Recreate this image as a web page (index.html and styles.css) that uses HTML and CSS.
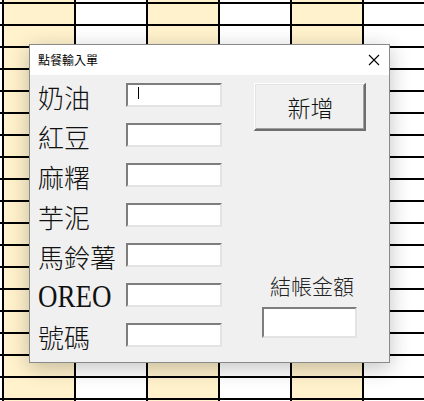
FILE: index.html
```html
<!DOCTYPE html>
<html lang="zh-Hant">
<head>
<meta charset="utf-8">
<title>點餐輸入單</title>
<link rel="stylesheet" href="styles.css">
</head>
<body>
<div class="sheet">
  <div class="dialog">
    <div class="titlebar">
      <span class="title">點餐輸入單</span>
      <svg class="close" width="12" height="12" viewBox="0 0 12 12"><path d="M1 1 L11 11 M11 1 L1 11" stroke="#000" stroke-width="1.1" fill="none"/></svg>
    </div>
    <div class="body">
      <div class="items">
        <div class="row"><span class="label">奶油</span><div class="field"><span class="caret"></span></div></div>
        <div class="row"><span class="label">紅豆</span><div class="field"></div></div>
        <div class="row"><span class="label">麻糬</span><div class="field"></div></div>
        <div class="row"><span class="label">芋泥</span><div class="field"></div></div>
        <div class="row"><span class="label">馬鈴薯</span><div class="field"></div></div>
        <div class="row"><span class="label latin">OREO</span><div class="field"></div></div>
        <div class="row"><span class="label">號碼</span><div class="field"></div></div>
      </div>
      <div class="side">
        <div class="button">新增</div>
        <div class="total-label">結帳金額</div>
        <div class="field total"></div>
      </div>
    </div>
  </div>
</div>
</body>
</html>
```
FILE: styles.css
```css
html, body {
  margin: 0;
  padding: 0;
  background: #fff;
}
.sheet {
  position: relative;
  width: 424px;
  height: 401px;
  overflow: hidden;
  background:
    linear-gradient(to right, #000 0 2px, transparent 2px) 2px 0 / 72px 100%,
    linear-gradient(to bottom, #000 0 2px, transparent 2px) 0 2px / 100% 22px,
    linear-gradient(to right, #fff2cc 0 72px, #fff 72px 144px) 3px 0 / 144px 100%;
  font-family: "Noto Sans CJK TC", "Noto Sans", sans-serif;
}
.dialog {
  position: absolute;
  left: 29px;
  top: 44px;
  width: 361px;
  height: 319px;
  box-sizing: border-box;
  border: 1px solid #8a8a8a;
  background: #f0f0f0;
  box-shadow: 0 5px 20px rgba(0, 0, 0, 0.24);
  display: flex;
  flex-direction: column;
}
.titlebar {
  height: 30px;
  background: #fff;
  display: flex;
  align-items: center;
  justify-content: space-between;
  padding: 0 9px 0 8px;
  flex: none;
}
.title {
  font-size: 12px;
  color: #000;
  line-height: 14px;
}
.close {
  display: block;
}
.body {
  flex: 1;
  display: flex;
}
.items {
  padding: 8px 0 0 8px;
  display: flex;
  flex-direction: column;
  gap: 16px;
}
.row {
  display: flex;
  align-items: center;
  height: 24px;
}
.label {
  width: 88px;
  font-size: 26px;
  font-weight: 300;
  line-height: 26px;
  color: #111;
  white-space: nowrap;
  position: relative;
  top: 2px;
}
.label.latin {
  font-family: "Liberation Serif", serif;
  font-weight: 400;
  font-size: 27px;
  transform: scaleY(1.15);
  transform-origin: left center;
}
.field {
  width: 96px;
  height: 24px;
  box-sizing: border-box;
  background: #fff;
  border-top: 2px solid #7d7d7d;
  border-left: 2px solid #7d7d7d;
  border-bottom: 2px solid #e3e3e3;
  border-right: 2px solid #e3e3e3;
  padding: 2px 0 0 10px;
}
.caret {
  display: block;
  width: 1px;
  height: 12px;
  background: #000;
}
.side {
  margin-left: 32px;
  width: 112px;
  display: flex;
  flex-direction: column;
  align-items: center;
  padding-top: 8px;
  padding-bottom: 24px;
}
.button {
  width: 112px;
  height: 48px;
  box-sizing: border-box;
  background: #f0f0f0;
  border-top: 1px solid #fff;
  border-left: 1px solid #fff;
  border-right: 2px solid #6e6e6e;
  border-bottom: 2px solid #6e6e6e;
  box-shadow: inset 1px 1px 0 #e3e3e3, inset -1px -1px 0 #a0a0a0;
  display: flex;
  align-items: center;
  justify-content: center;
  font-size: 23px;
  font-weight: 300;
  color: #111;
  padding-left: 2px;
}
.total-label {
  margin-top: auto;
  font-size: 21px;
  font-weight: 300;
  line-height: 24px;
  color: #222;
  margin-bottom: 10px;
  padding-left: 4px;
}
.field.total {
  width: 95px;
  height: 31px;
  margin-left: -2px;
}
```
